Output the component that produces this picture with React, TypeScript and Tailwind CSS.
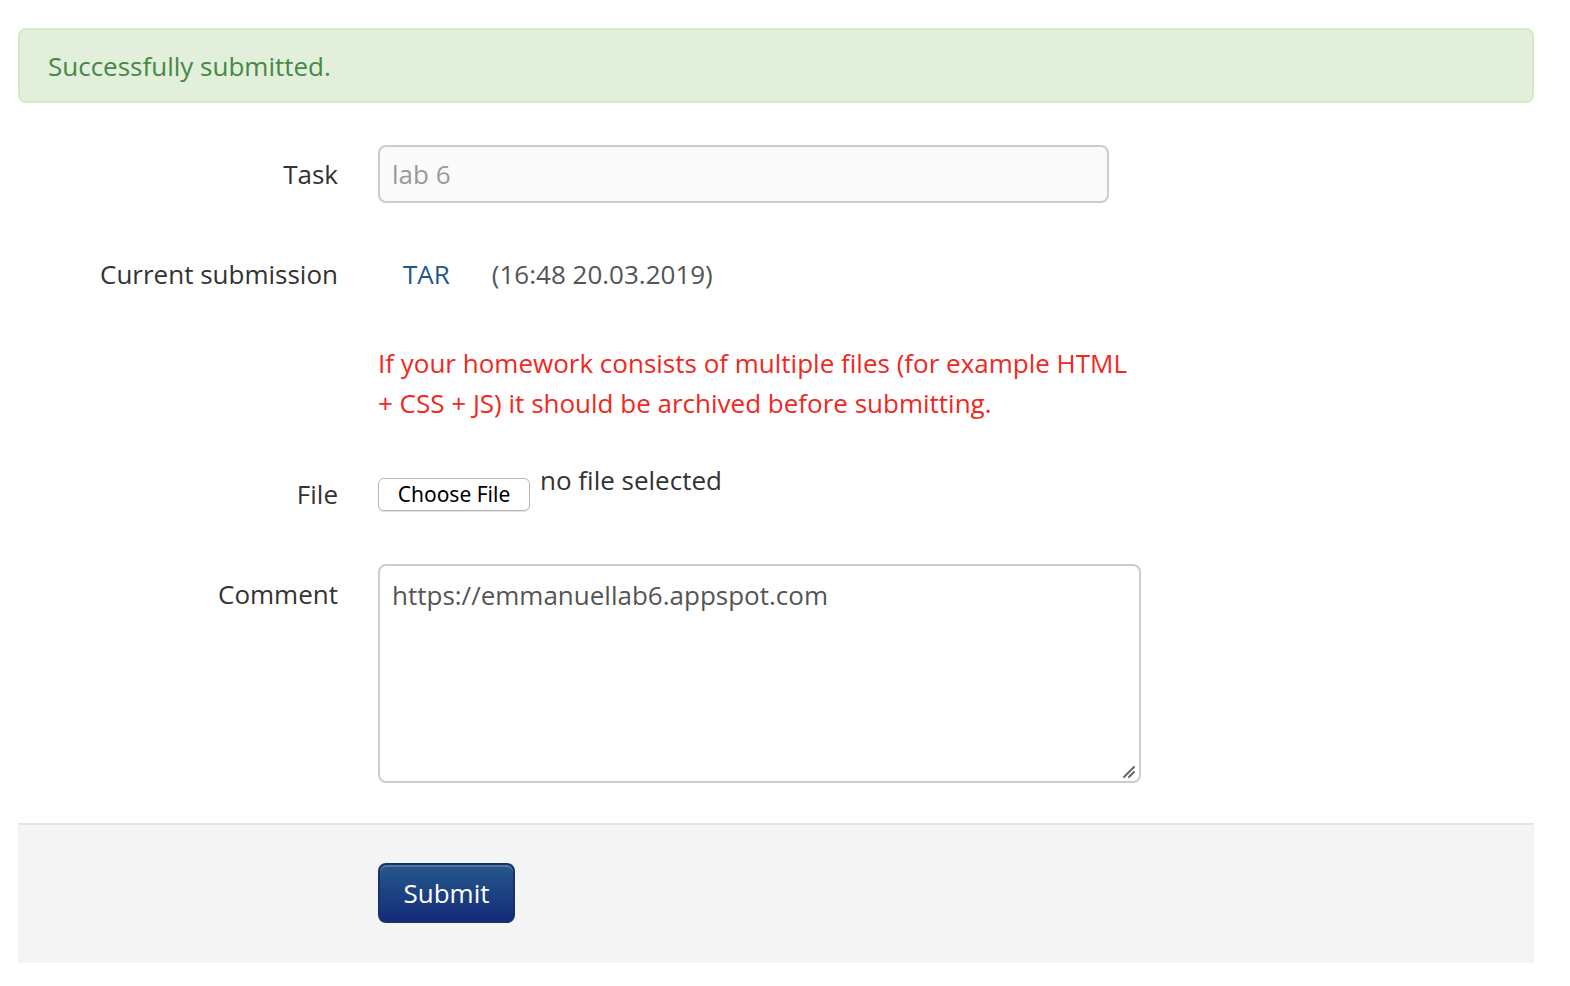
export default function App() {
  return (
    <div
      className="min-h-[986px] bg-white pl-[18px] pr-[36px] pt-[28px] text-[26px] leading-[40px] text-[#333]"
      style={{ fontFamily: '"Open Sans", "Liberation Sans", sans-serif' }}
    >
      <div className="mb-[42px] flex h-[75px] items-center rounded-[8px] border-2 border-[#d6e9c6] bg-[#e2efda] px-[28px] text-[#468847]">
        Successfully submitted.
      </div>

      <form>
        <div className="mb-[40px] flex">
          <label className="w-[320px] shrink-0 pt-[9px] text-right">Task</label>
          <div className="ml-[40px]">
            <div className="flex h-[58px] w-[731px] items-center rounded-[8px] border-2 border-[#ccc] bg-[#fafafa] px-[12px] text-[#999]">
              lab 6
            </div>
          </div>
        </div>

        <div className="mb-[40px] flex">
          <label className="w-[320px] shrink-0 pt-[11px] text-right">Current submission</label>
          <div className="ml-[40px] flex pt-[11px]">
            <a className="ml-[25px] text-[#22578c]">TAR</a>
            <span className="ml-[42px] text-[#555]">(16:48 20.03.2019)</span>
          </div>
        </div>

        <div className="mb-[40px] flex">
          <div className="w-[320px] shrink-0" />
          <p className="ml-[40px] w-[760px] pt-[9px] text-[#f0281e]">
            If your homework consists of multiple files (for example HTML + CSS + JS) it should be archived before submitting.
          </p>
        </div>

        <div className="mb-[40px] flex h-[61px]">
          <label className="w-[320px] shrink-0 pt-[11px] text-right">File</label>
          <div className="ml-[40px] flex items-start">
            <button
              type="button"
              className="mt-[15px] flex h-[33px] w-[152px] items-center justify-center rounded-[6px] border border-[#b9b9b9] bg-white text-[21px] leading-none text-black shadow-[0_1px_1px_rgba(0,0,0,0.12)]"
              style={{ fontFamily: '"Noto Sans", "Liberation Sans", Arial, sans-serif' }}
            >
              Choose File
            </button>
            <span className="-mt-[3px] ml-[10px]">no file selected</span>
          </div>
        </div>

        <div className="mb-[40px] flex">
          <label className="w-[320px] shrink-0 pt-[10px] text-right">Comment</label>
          <div className="relative ml-[40px]">
            <textarea
              defaultValue="https://emmanuellab6.appspot.com"
              className="block h-[219px] w-[763px] resize-none rounded-[8px] border-2 border-[#ccc] bg-white px-[12px] py-[9px] text-[26px] leading-[40px] text-[#555] outline-none"
            />
            <svg className="absolute bottom-[4px] right-[5px]" width="14" height="14" viewBox="0 0 14 14">
              <path d="M2 12 L12 2 M7 12 L12 7" stroke="#666" strokeWidth="2" strokeLinecap="round" />
            </svg>
          </div>
        </div>

        <div className="flex h-[140px] border-t-2 border-[#e5e5e5] bg-[#f4f4f4] pt-[38px]">
          <div className="ml-[360px]">
            <button
              type="button"
              className="h-[60px] w-[137px] rounded-[8px] border-2 border-[#163170] bg-gradient-to-b from-[#275889] to-[#162a7a] text-[26px] text-white shadow-[inset_0_2px_0_rgba(255,255,255,0.2)]"
            >
              Submit
            </button>
          </div>
        </div>
      </form>
    </div>
  );
}
